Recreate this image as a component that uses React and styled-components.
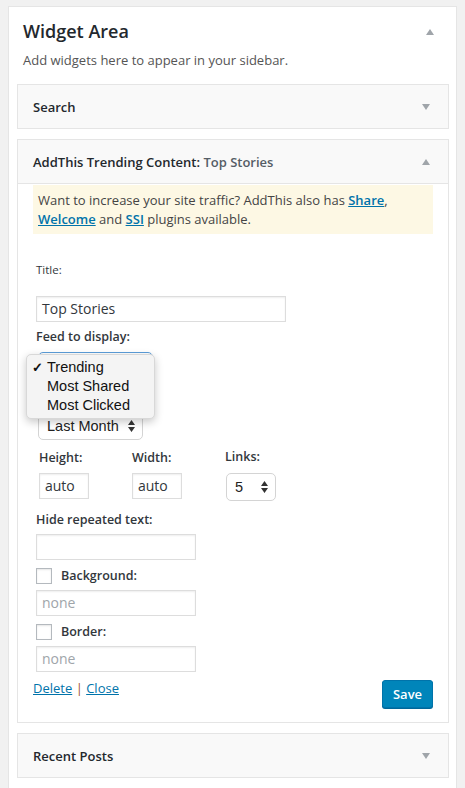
import React from 'react';
import styled, { createGlobalStyle } from 'styled-components';

const GlobalStyle = createGlobalStyle`
  html, body {
    margin: 0;
    padding: 0;
    background: #f1f1f1;
    font-family: "Open Sans", "Liberation Sans", sans-serif;
    color: #444;
  }
`;

const Page = styled.div`
  padding: 6px 8px 0 8px;
  height: 788px;
  box-sizing: border-box;
  overflow: hidden;
`;

const Panel = styled.div`
  background: #fff;
  border: 1px solid #e5e5e5;
  padding-bottom: 40px;
`;

const PanelHead = styled.div`
  display: flex;
  justify-content: space-between;
  align-items: center;
  padding: 12px 22px 0 14px;

  h2 {
    margin: 0;
    font-size: 18px;
    line-height: 25px;
    font-weight: 600;
    color: #23282d;
  }
`;

const Description = styled.p`
  margin: 6px 0 0 14px;
  font-size: 13px;
  line-height: 20px;
  color: #555;
`;

const WidgetList = styled.div`
  padding: 14px 7px 0 8px;
`;

const Widget = styled.div`
  border: 1px solid #e5e5e5;
  background: #fff;
  margin-bottom: ${p => p.$gap || 10}px;
`;

const WidgetTop = styled.div`
  display: flex;
  align-items: center;
  justify-content: space-between;
  height: ${p => p.$h || 43}px;
  padding: 0 18px 0 15px;
  background: #f9f9f9;
  border-bottom: ${p => (p.$open ? '1px solid #e5e5e5' : 'none')};
  font-size: 13px;
  font-weight: 600;
  color: #23282d;

  span {
    color: #555d66;
  }
`;

const Arrow = ({ up }) => (
  <svg width="8" height="6" viewBox="0 0 8 6">
    <path d={up ? 'M0 6 L4 0 L8 6 Z' : 'M0 0 L8 0 L4 6 Z'} fill="#a0a5aa" />
  </svg>
);

const WidgetBody = styled.div`
  padding: 1px 15px 14px 15px;
`;

const Notice = styled.div`
  background: #fdf8e4;
  padding: 6px 5px 5px 5px;
  font-size: 13px;
  line-height: 19px;
  color: #444;

  a {
    color: #0073aa;
    font-weight: 600;
    text-decoration: underline;
  }
`;

const Form = styled.div`
  padding-left: 3px;
  position: relative;
`;

const Label = styled.div`
  margin-top: ${p => p.$mt || 0}px;
  font-size: ${p => (p.$plain ? 11.5 : 12.5)}px;
  font-weight: ${p => (p.$plain ? 400 : 600)};
  line-height: 16px;
  color: #32373c;
`;

const TextInput = styled.div`
  box-sizing: border-box;
  margin-top: ${p => p.$mt || 0}px;
  width: ${p => p.$w}px;
  height: 26px;
  border: 1px solid #ddd;
  box-shadow: inset 0 1px 2px rgba(0, 0, 0, 0.07);
  background: #fff;
  padding: 0 5px;
  font-size: 14px;
  line-height: 24px;
  color: ${p => (p.$placeholder ? '#a0a5aa' : '#32373c')};
`;

const Select = styled.div`
  box-sizing: border-box;
  margin-top: ${p => p.$mt || 0}px;
  margin-left: ${p => p.$ml || 0}px;
  width: ${p => p.$w}px;
  height: 28px;
  display: flex;
  align-items: center;
  justify-content: space-between;
  padding: 0 7px 0 8px;
  border: 1px solid ${p => (p.$focus ? '#5b9dd9' : '#d4d4d4')};
  border-radius: 5px;
  background: #fff;
  font-family: "Liberation Sans", Arial, sans-serif;
  font-size: 14.5px;
  color: #222;
`;

const Updown = () => (
  <svg width="7" height="12" viewBox="0 0 7 12">
    <path d="M0 5 L3.5 0 L7 5 Z M0 7 L7 7 L3.5 12 Z" fill="#333" />
  </svg>
);

const Popup = styled.div`
  position: absolute;
  left: -7px;
  top: 92px;
  width: 129px;
  height: 65px;
  box-sizing: border-box;
  padding-top: 3px;
  background: #f4f4f4;
  border: 1px solid #d8d8d8;
  border-radius: 5px;
  box-shadow: 0 3px 8px rgba(0, 0, 0, 0.22);
  font-family: "Liberation Sans", Arial, sans-serif;
  font-size: 14.5px;
  color: #111;
`;

const Option = styled.div`
  display: flex;
  line-height: 19px;

  i {
    width: 20px;
    text-align: center;
    font-style: normal;
    font-size: 13px;
    font-weight: 700;
  }
`;

const Row = styled.div`
  display: grid;
  grid-template-columns: 93px 93px 93px;
  margin-top: ${p => p.$mt || 0}px;
  padding-left: 3px;
`;

const Field = styled.div`
  display: flex;
  flex-direction: column;
  gap: 7px;
`;

const CheckRow = styled.div`
  display: flex;
  align-items: center;
  gap: 9px;
  margin-top: ${p => p.$mt || 0}px;
  height: 16px;
`;

const Check = styled.span`
  box-sizing: border-box;
  width: 16px;
  height: 16px;
  border: 1px solid #b4b9be;
  background: #fff;
  box-shadow: inset 0 1px 2px rgba(0, 0, 0, 0.1);
`;

const Footer = styled.div`
  display: flex;
  justify-content: space-between;
  align-items: flex-start;
  margin-top: 8px;
`;

const Links = styled.div`
  font-size: 13px;
  line-height: 16px;
  color: #a0522d;

  a {
    color: #0073aa;
    text-decoration: underline;
  }
`;

const SaveButton = styled.button`
  width: 51px;
  height: 28px;
  background: #0085ba;
  border: 1px solid #0073aa;
  border-radius: 3px;
  box-shadow: 0 1px 0 #006799;
  color: #fff;
  font-family: "Open Sans", sans-serif;
  font-size: 13px;
  font-weight: 600;
  padding: 0;
`;

export default function App() {
  return (
    <>
      <GlobalStyle />
      <Page>
        <Panel>
          <PanelHead>
            <h2>Widget Area</h2>
            <Arrow up />
          </PanelHead>
          <Description>Add widgets here to appear in your sidebar.</Description>
          <WidgetList>
            <Widget>
              <WidgetTop>
                Search
                <Arrow />
              </WidgetTop>
            </Widget>

            <Widget>
              <WidgetTop $open>
                <div>
                  AddThis Trending Content: <span>Top Stories</span>
                </div>
                <Arrow up />
              </WidgetTop>
              <WidgetBody>
                <Notice>
                  Want to increase your site traffic? AddThis also has <a>Share</a>,{' '}
                  <a>Welcome</a> and <a>SSI</a> plugins available.
                </Notice>
                <Form>
                  <Label $plain $mt={28}>Title:</Label>
                  <TextInput $mt={18} $w={250}>Top Stories</TextInput>
                  <Label $mt={7}>Feed to display:</Label>
                  <Select $mt={7} $ml={2} $w={115} $focus />
                  <Select $mt={32} $ml={2} $w={105}>
                    Last Month
                    <Updown />
                  </Select>
                  <Popup>
                    <Option><i>✓</i>Trending</Option>
                    <Option><i />Most Shared</Option>
                    <Option><i />Most Clicked</Option>
                  </Popup>
                </Form>
                <Form>
                  <Row $mt={10}>
                    <Field>
                      <Label>Height:</Label>
                      <TextInput $w={50}>auto</TextInput>
                    </Field>
                    <Field>
                      <Label>Width:</Label>
                      <TextInput $w={50}>auto</TextInput>
                    </Field>
                    <Field>
                      <Label style={{ marginTop: -1, marginBottom: 1 }}>Links:</Label>
                      <Select $ml={1} $w={50}>
                        5
                        <Updown />
                      </Select>
                    </Field>
                  </Row>
                  <Label $mt={11}>Hide repeated text:</Label>
                  <TextInput $mt={6} $w={160} />
                  <CheckRow $mt={8}>
                    <Check />
                    <Label>Background:</Label>
                  </CheckRow>
                  <TextInput $mt={6} $w={160} $placeholder>none</TextInput>
                  <CheckRow $mt={8}>
                    <Check />
                    <Label>Border:</Label>
                  </CheckRow>
                  <TextInput $mt={6} $w={160} $placeholder>none</TextInput>
                </Form>
                <Footer>
                  <Links>
                    <a>Delete</a> | <a>Close</a>
                  </Links>
                  <SaveButton>Save</SaveButton>
                </Footer>
              </WidgetBody>
            </Widget>

            <Widget>
              <WidgetTop>
                Recent Posts
                <Arrow />
              </WidgetTop>
            </Widget>
          </WidgetList>
        </Panel>
      </Page>
    </>
  );
}
